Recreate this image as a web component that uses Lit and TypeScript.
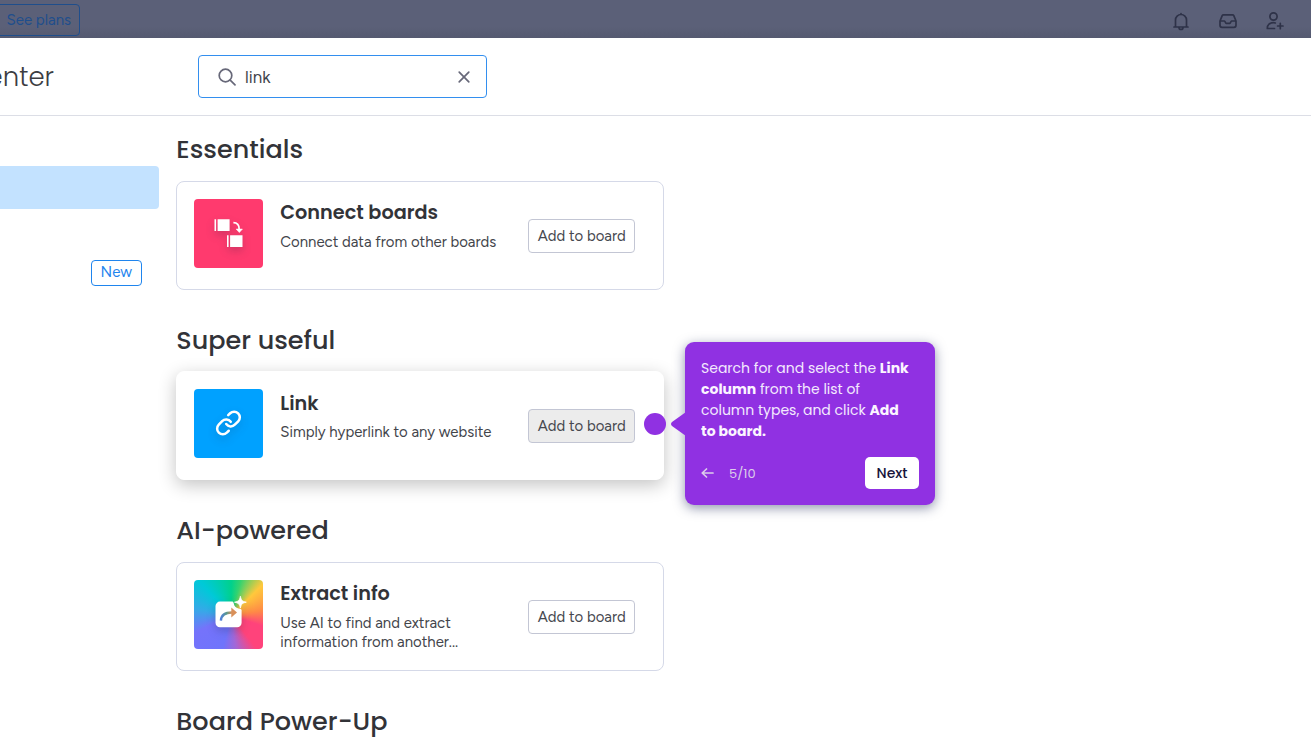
import { LitElement, html, css, svg } from "lit";
import { customElement, property } from "lit/decorators.js";

const sans = css`"Figtree", "Inter", sans-serif`;
const display = css`"Poppins", "Inter", sans-serif`;

const connectIcon = svg`
  <g fill="#fff">
    <path d="M20.5 20.3h1.6v11.8h-1.6zM23.6 20.3h12v11.8h-12z"/>
    <path d="M33 36.3h1.6v11.8H33zM36.1 36.3h12.4v11.8H36.1z"/>
    <path d="M42.2 30.1h6.2l-3.1 3.4z" stroke="#fff" stroke-width=".6" stroke-linejoin="round"/>
  </g>
  <path d="M39.4 23.6c3.3 0 5.8 2.3 5.8 6.8" fill="none" stroke="#fff" stroke-width="1.7"/>`;

const linkIcon = svg`
  <g fill="none" stroke="#fff" stroke-width="2.2" stroke-linecap="round" stroke-linejoin="round"
    transform="translate(20.8 20.3) scale(1.14)">
    <path d="M10 13a5 5 0 0 0 7.54.54l3-3a5 5 0 0 0-7.07-7.07l-1.72 1.71"/>
    <path d="M14 11a5 5 0 0 0-7.54-.54l-3 3a5 5 0 0 0 7.07 7.07l1.71-1.71"/>
  </g>`;

const extractIcon = svg`
  <defs>
    <linearGradient id="arrow" x1="0" x2="1">
      <stop offset="0" stop-color="#4f7ed9"/><stop offset=".5" stop-color="#5b9a8c"/><stop offset="1" stop-color="#d9905a"/>
    </linearGradient>
  </defs>
  <path fill="#fff" d="M26 21.6h12.4c.8 0 1 .9 1.4 2 .5 2.8 2 4.4 4.6 4.9 1.9.4 3.2.5 3.2 1.5v12.8a4.5 4.5 0 0 1-4.5 4.5H26a4.5 4.5 0 0 1-4.500-4.500V26.100a4.500 4.500 0 0 1 4.500-4.500z"/>
  <path fill="#fff" d="M46.400 16.300c.9 4.200 1.700 5 5.900 5.900-4.200.9-5 1.700-5.900 5.900-.9-4.200-1.700-5-5.900-5.900 4.200-.9 5-1.700 5.900-5.900z" stroke="#fff" stroke-width=".8" stroke-linejoin="round"/>
  <path d="M26.900 40.600c.3-5 3.600-8.100 11.100-8.100" fill="none" stroke="url(#arrow)" stroke-width="2.400"/>
  <path d="M37.300 27.600l5.700 4.900-5.700 4.900z" fill="#d9905a"/>`;

@customElement("column-card")
export class ColumnCard extends LitElement {
  static properties = { raised: { type: Boolean, reflect: true } };
  @property() heading = "";
  @property() text = "";
  @property() kind = "connect";

  static styles = css`
    :host {
      box-sizing: border-box;
      display: flex;
      width: 488px;
      height: 109px;
      padding: 17px 28px 17px 17px;
      border: 1px solid #d5d9e8;
      border-radius: 8px;
      background: #fff;
      color: #323338;
    }
    :host([raised]) {
      border-color: #fff;
      box-shadow: 0 5px 18px rgba(0, 0, 0, 0.24);
    }
    .tile { width: 69px; height: 69px; border-radius: 4px; flex: none; overflow: hidden; }
    .tile svg { display: block; filter: drop-shadow(0 4px 4px rgba(30, 30, 60, 0.22)); }
    .connect { background: #ff3a6e; }
    .link { background: #00a1ff; }
    .extract {
      background: conic-gradient(from 0deg at 54% 52%, #00d18c 0deg, #35d36f 15deg, #ffc83c 45deg,
        #ff8a46 80deg, #ff437b 108deg, #ff437b 142deg, #a267d8 172deg, #6f74fb 195deg,
        #7573fb 245deg, #37a8e8 280deg, #00c9d8 318deg, #00d18c 360deg);
    }
    .copy { flex: 1; padding: 0.5px 0 0 17px; white-space: nowrap; }
    .title { font: 600 19.250px/28px ${display}; }
    .text { font: 400 14.950px/19px ${sans}; margin-top: 5.700px; white-space: pre-line; color: #43454b; }
    .add {
      box-sizing: border-box;
      width: 107px;
      height: 34px;
      margin-top: 20px;
      padding: 0;
      border: 1px solid #c3c6d4;
      border-radius: 4px;
      background: #fff;
      color: #46484f;
      font: 400 14.950px/30px ${sans};
    }
    :host([raised]) .add { background: #ececec; }
  `;

  render() {
    const icon = this.kind === "connect" ? connectIcon : this.kind === "link" ? linkIcon : extractIcon;
    return html`
      <div class="tile ${this.kind}"><svg width="69" height="69" viewBox="0 0 69 69">${icon}</svg></div>
      <div class="copy">
        <div class="title">${this.heading}</div>
        <div class="text">${this.text}</div>
      </div>
      <button class="add">Add to board</button>
    `;
  }
}

@customElement("app-root")
export class AppRoot extends LitElement {
  static styles = css`
    :host {
      display: flex;
      flex-direction: column;
      position: relative;
      width: 1311px;
      height: 745px;
      overflow: hidden;
      background: #fff;
      color: #323338;
      font-family: ${sans};
    }
    .bar {
      box-sizing: border-box;
      flex: none;
      height: 38px;
      display: flex;
      justify-content: space-between;
      background: linear-gradient(#5b6078 70%, #555a70);
    }
    .plans {
      box-sizing: border-box;
      width: 86px;
      height: 32px;
      margin: 4px 0 0 -6px;
      padding-right: 8px;
      border: 1px solid #1f4e8c;
      border-radius: 4px;
      text-align: right;
      white-space: nowrap;
      font: 400 15px/30px ${sans};
      color: #1f4e8c;
    }
    .tools { display: flex; gap: 27px; padding: 11px 26px 0 0; color: #2e3248; }
    .tools svg { width: 20px; height: 20px; fill: none; stroke: currentColor; stroke-width: 1.7; stroke-linecap: round; stroke-linejoin: round; }
    .head {
      box-sizing: border-box;
      flex: none;
      height: 78px;
      display: flex;
      align-items: center;
      border-bottom: 1.500px solid #dcdee6;
    }
    .name {
      width: 54px;
      display: flex;
      justify-content: flex-end;
      overflow: hidden;
      font: 300 26px/40px ${display};
      color: #3c3d42;
    }
    .search {
      box-sizing: border-box;
      display: flex;
      align-items: center;
      width: 289px;
      height: 43px;
      margin-left: 143.500px;
      padding: 0 15px 0 19px;
      border: 1.300px solid #338fef;
      border-radius: 4px;
    }
    .search span { flex: 1; padding-left: 9.500px; font: 400 17px/24px ${sans}; color: #43454c; }
    .search svg { flex: none; fill: none; stroke: #676879; stroke-width: 1.700; stroke-linecap: round; }
    .body { display: flex; flex: 1; min-height: 0; }
    .side { width: 159px; padding-top: 49.500px; }
    .chosen { height: 43px; background: #c3e2ff; border-radius: 0 4px 4px 0; }
    .tag {
      box-sizing: border-box;
      width: 51.500px;
      height: 26px;
      margin: 51.500px 17px 0 auto;
      border: 1.300px solid #1f85ee;
      border-radius: 4px;
      text-align: center;
      font: 400 15px/23px ${sans};
      color: #1f85ee;
    }
    .list { padding-left: 17.300px; }
    .group { height: 190.600px; }
    h2 { margin: 0; padding-top: 12px; height: 52.500px; font: 500 25.500px/43px ${display}; white-space: nowrap; }
    .dot { position: absolute; left: 644px; top: 413px; width: 22px; height: 22px; border-radius: 50%; background: #9031e2; }
    .tip {
      box-sizing: border-box;
      position: absolute;
      left: 685px;
      top: 342.400px;
      width: 250px;
      height: 163px;
      padding: 15.600px 16px;
      border-radius: 9px;
      background: #9031e2;
      color: #f3e9fd;
      box-shadow: 0 3px 12px rgba(30, 40, 90, 0.500);
      font: 400 14px/21px ${display};
    }
    .tail { position: absolute; left: -15px; top: 69px; }
    .line { white-space: nowrap; }
    .line b { font-weight: 700; color: #fbf5ff; }
    .foot { display: flex; align-items: center; height: 32px; margin-top: 15.400px; color: #dccdea; }
    .foot span { flex: 1; padding-left: 15px; font-size: 13px; }
    .next {
      width: 54px;
      height: 32px;
      padding: 0;
      border: 0;
      border-radius: 5px;
      background: #fff;
      color: #17133b;
      font: 500 14px/32px ${display};
    }
  `;

  render() {
    return html`
      <div class="bar">
        <div class="plans">See plans</div>
        <div class="tools">
          <svg viewBox="0 0 20 20"><path d="M3 16h14M4.500 16V9a5.500 5.500 0 0 1 11 0v7M10 3.500V2.500M8 16.500a2 2 0 0 0 4 0"/></svg>
          <svg viewBox="0 0 20 20"><path d="M2 10l2.200-5.300a1.500 1.500 0 0 1 1.400-.9h8.800a1.500 1.500 0 0 1 1.400.9L18 10v4.300a2 2 0 0 1-2 2H4a2 2 0 0 1-2-2zM2 10h4.500c.7 0 .8 2.400 1.800 2.400h3.400c1 0 1.100-2.400 1.800-2.400H18"/></svg>
          <svg viewBox="0 0 20 20"><circle cx="8.500" cy="5.500" r="3.600"/><path d="M9.500 17.500H2.300c0-3.800 2.400-5.800 6.200-5.800.8 0 1.200.1 1.800.3M15.300 12.300v5.400M12.600 15h5.400"/></svg>
        </div>
      </div>
      <div class="head">
        <div class="name">Center</div>
        <div class="search">
          <svg width="18" height="18" viewBox="0 0 18 18"><circle cx="7.500" cy="7.500" r="6.300"/><path d="M12.200 12.200l4.800 4.600"/></svg>
          <span>link</span>
          <svg width="14" height="14" viewBox="0 0 14 14"><path d="M2.200 2.200l9.600 9.600M11.800 2.200l-9.600 9.600"/></svg>
        </div>
      </div>
      <div class="body">
        <div class="side">
          <div class="chosen"></div>
          <div class="tag">New</div>
        </div>
        <div class="list">
          <div class="group"><h2>Essentials</h2>
            <column-card heading="Connect boards" text="Connect data from other boards" kind="connect"></column-card></div>
          <div class="group"><h2>Super useful</h2>
            <column-card raised heading="Link" text="Simply hyperlink to any website" kind="link"></column-card></div>
          <div class="group"><h2>AI-powered</h2>
            <column-card heading="Extract info" .text=${"Use AI to find and extract\ninformation from another..."} kind="extract"></column-card></div>
          <div class="group"><h2>Board Power-Up</h2></div>
        </div>
      </div>
      <div class="dot"></div>
      <div class="tip">
        <svg class="tail" width="16" height="26" viewBox="0 0 16 26"><path fill="#9031e2" d="M16 1v24L2 15q-2-2 0-4z"/></svg>
        <div class="line">Search for and select the <b>Link</b></div>
        <div class="line"><b>column</b> from the list of</div>
        <div class="line">column types, and click <b>Add</b></div>
        <div class="line"><b>to board.</b></div>
        <div class="foot">
          <svg width="13" height="12" viewBox="0 0 13 12"><path d="M12 6H1.500M5.500 2l-4.300 4 4.300 4" fill="none" stroke="currentColor" stroke-width="1.700" stroke-linecap="round" stroke-linejoin="round"/></svg>
          <span>5/10</span>
          <button class="next">Next</button>
        </div>
      </div>
    `;
  }
}
